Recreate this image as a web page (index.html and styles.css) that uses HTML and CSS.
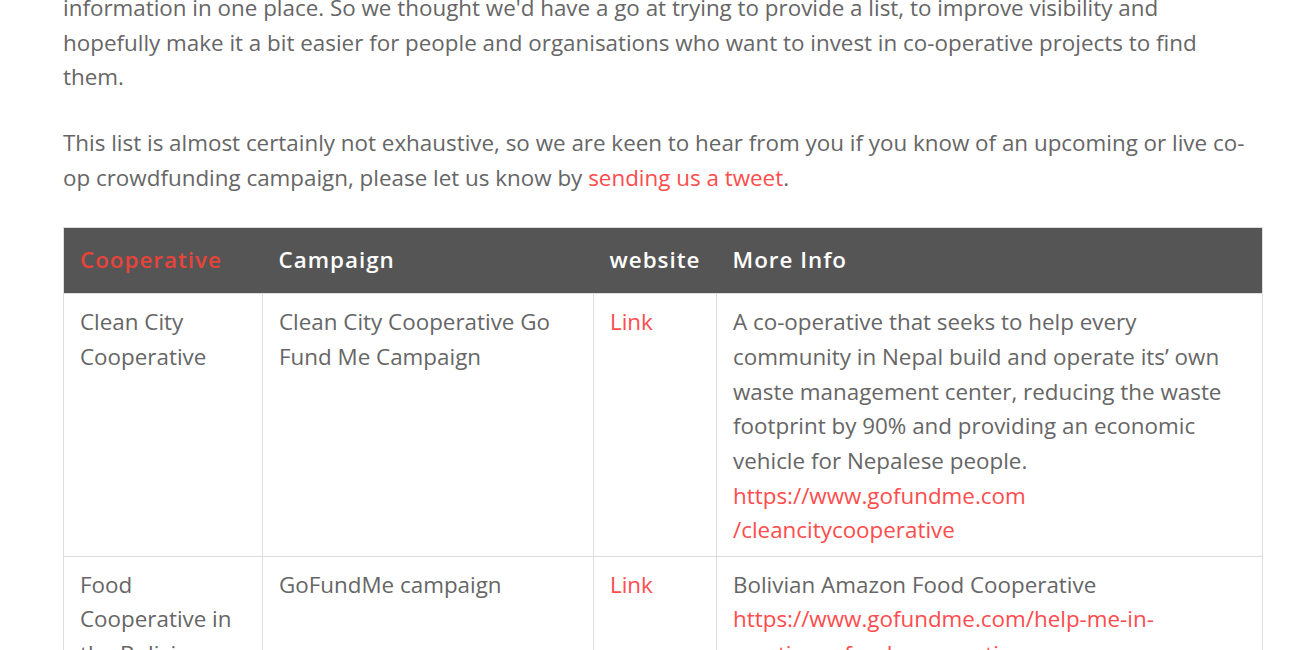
FILE: index.html
```html
<!DOCTYPE html>
<html>
<head>
    <meta charset="utf-8">
    <link rel="stylesheet" href="styles.css">
</head>
<body>
    <div class="entry-content">
        <p>information in one place. So we thought we'd have a go at trying to provide a list, to improve visibility and hopefully make it a bit easier for people and organisations who want to invest in co-operative projects to find them.</p>

        <p>This list is almost certainly not exhaustive, so we are keen to hear from you if you know of an upcoming or live co-op crowdfunding campaign, please let us know by <a href="#">sending us a tweet</a>.</p>

        <table class="coop-table">
            <colgroup>
                <col class="col-coop">
                <col class="col-campaign">
                <col class="col-website">
                <col>
            </colgroup>
            <thead>
                <tr>
                    <th class="highlight">Cooperative</th>
                    <th>Campaign</th>
                    <th>website</th>
                    <th>More Info</th>
                </tr>
            </thead>
            <tbody>
                <tr>
                    <td>Clean City Cooperative</td>
                    <td>Clean City Cooperative Go Fund Me Campaign</td>
                    <td><a href="#">Link</a></td>
                    <td>A co-operative that seeks to help every community in Nepal build and operate its’ own waste management center, reducing the waste footprint by 90% and providing an economic vehicle for Nepalese people.<br><a href="#">https://www.gofundme.com<br>/cleancitycooperative</a></td>
                </tr>
                <tr>
                    <td>Food Cooperative in the Bolivian Amazon</td>
                    <td>GoFundMe campaign</td>
                    <td><a href="#">Link</a></td>
                    <td>Bolivian Amazon Food Cooperative<br><a href="#">https://www.gofundme.com/help-me-in-creating-a-food-cooperative</a></td>
                </tr>
            </tbody>
        </table>
    </div>
</body>
</html>
```

FILE: styles.css
```css
body {
    margin: 0;
    background: #fff;
    color: #666;
    font-family: 'Open Sans', 'Liberation Sans', sans-serif;
    font-size: 22.4px;
    line-height: 34.7px;
}

a {
    color: #ff4c4c;
    text-decoration: none;
}

.entry-content {
    width: 1200px;
    margin: -9px 0 0 63px;
}

.entry-content p {
    max-width: 1195px;
    margin: 0 0 31px;
}

.coop-table {
    width: 1200px;
    border-collapse: collapse;
    table-layout: fixed;
    border: 1px solid #ddd;
}

.col-coop {
    width: 199px;
}

.col-campaign {
    width: 331px;
}

.col-website {
    width: 123px;
}

.coop-table th {
    background: #555;
    color: #fff;
    font-weight: 600;
    letter-spacing: 1px;
    text-align: left;
    padding: 15.5px 16px;
    border: none;
}

.coop-table th.highlight {
    color: #e8433a;
}

.coop-table td {
    vertical-align: top;
    padding: 11px 20px 7.5px 16px;
    border: 1px solid #ddd;
    word-wrap: break-word;
}
```
